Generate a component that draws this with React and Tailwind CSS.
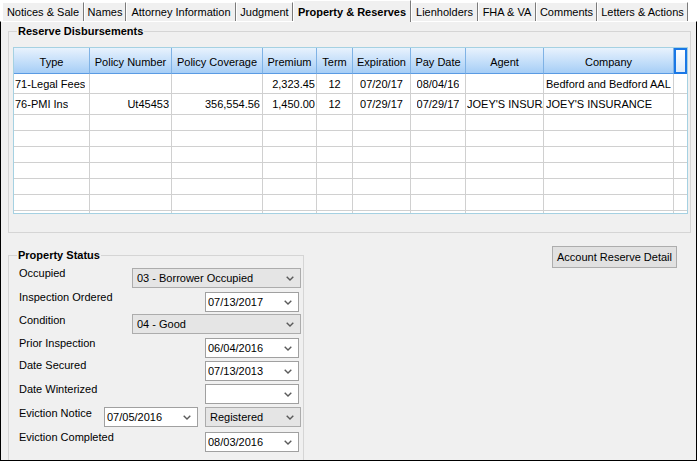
import React from "react";

const tabs = [
  { label: "Notices & Sale", w: "w-[82px]" },
  { label: "Names", w: "w-[42px]" },
  { label: "Attorney Information", w: "w-[110px]" },
  { label: "Judgment", w: "w-[57px]" },
  { label: "Property & Reserves", w: "w-[118px]", active: true },
  { label: "Lienholders", w: "w-[67px]" },
  { label: "FHA & VA", w: "w-[58px]" },
  { label: "Comments", w: "w-[61px]" },
  { label: "Letters & Actions", w: "w-[91px]" },
];

const cols = [
  { label: "Type", w: "w-[76px]", align: "justify-start pl-[1px]" },
  { label: "Policy Number", w: "w-[82px]", align: "justify-end pr-[2px]" },
  { label: "Policy Coverage", w: "w-[91px]", align: "justify-end pr-[2px]" },
  { label: "Premium", w: "w-[54px]", align: "justify-end pr-[1px]" },
  { label: "Term", w: "w-[36px]", align: "justify-center" },
  { label: "Expiration", w: "w-[58px]", align: "justify-center" },
  { label: "Pay Date", w: "w-[55px]", align: "justify-center" },
  { label: "Agent", w: "w-[78px]", align: "justify-start pl-[1px]" },
  { label: "Company", w: "w-[130px]", align: "justify-start pl-[2px]" },
];

const rows = [
  {
    h: "h-[20px]",
    pt: "pt-[1px]",
    cells: ["71-Legal Fees", "", "", "2,323.45", "12", "07/20/17", "08/04/16", "", "Bedford and Bedford AAL"],
  },
  {
    h: "h-[21px]",
    pt: "pt-[1px]",
    cells: ["76-PMI Ins", "Ut45453", "356,554.56", "1,450.00", "12", "07/29/17", "07/29/17", "JOEY'S INSURANCE", "JOEY'S INSURANCE"],
  },
  ...Array.from({ length: 7 }, () => ({ h: "h-[16px]", pt: "", cells: Array(9).fill("") })),
];

function Chevron() {
  return (
    <svg width="8" height="5" viewBox="0 0 8 5" className="shrink-0">
      <path d="M0.7 0.7 L4 4 L7.3 0.7" fill="none" stroke="#5a5a5a" strokeWidth="1.4" />
    </svg>
  );
}

function Combo({ text, w }) {
  return (
    <div className={`${w} h-[20px] shrink-0 bg-[#e5e5e5] border border-[#acacac] flex items-center pl-[4px] pr-[6px]`}>
      <span className="flex-1 whitespace-nowrap overflow-hidden">{text}</span>
      <Chevron />
    </div>
  );
}

function DateBox({ text }) {
  return (
    <div className="w-[94px] h-[20px] shrink-0 bg-white border border-[#a0a0a0] flex items-center pl-[2px] pr-[6px]">
      <span className="flex-1 whitespace-nowrap overflow-hidden">{text}</span>
      <Chevron />
    </div>
  );
}

function Label({ children, adj = "-mt-[1px]" }) {
  return <div className={`pl-[10px] leading-[13px] whitespace-nowrap ${adj}`}>{children}</div>;
}

export default function App() {
  return (
    <div className="w-[697px] h-[461px] bg-white flex flex-col overflow-hidden font-['Liberation_Sans',Arial,sans-serif] text-[11px] leading-[13px] text-black">
      {/* Tab strip */}
      <div className="h-[21px] shrink-0 flex items-end pl-[2px] relative z-10">
        {tabs.map((t) =>
          t.active ? (
            <div
              key={t.label}
              className={`${t.w} h-[22px] -mb-[1px] bg-[#f0f0f0] border-t border-l border-r border-t-white border-l-white border-r-[#7a7a7a] flex items-center justify-center pt-[2px] font-bold whitespace-nowrap`}
            >
              {t.label}
            </div>
          ) : (
            <div
              key={t.label}
              className={`${t.w} h-[19px] bg-[#f0f0f0] border-t border-l border-r border-t-white border-l-white border-r-[#7a7a7a] flex items-center justify-center whitespace-nowrap`}
            >
              {t.label}
            </div>
          )
        )}
      </div>

      {/* Tab page */}
      <div className="flex-1 min-h-0 bg-[#f0f0f0] border border-black border-t-white overflow-hidden flex flex-col">
        <fieldset className="ml-[7px] mt-[3px] w-[683px] border border-[#d5d5d5] pl-[4px] pr-[2px] pb-[18px] shrink-0">
          <legend className="ml-[4px] px-[1px] font-bold leading-[13px]">Reserve Disbursements</legend>
          <div className="mt-[9px] w-[675px] h-[167px] border border-[#a5d1e2] bg-white overflow-hidden">
            {/* header */}
            <div className="flex h-[26px]">
              {cols.map((c) => (
                <div
                  key={c.label}
                  className={`${c.w} h-full shrink-0 flex items-center justify-center pt-[3px] whitespace-nowrap overflow-hidden border-r border-b border-r-[#7fb2e5] border-b-[#5a9be3] bg-linear-to-b from-[#e8f2fd] to-[#a6cef6]`}
                >
                  {c.label}
                </div>
              ))}
              <div className="w-[13px] h-full shrink-0 border-2 border-[#1a78e6] bg-linear-to-b from-white to-[#dcebfb]" />
            </div>
            {/* rows */}
            {rows.map((r, ri) => (
              <div key={ri} className={`flex ${r.h}`}>
                {cols.map((c, ci) => (
                  <div
                    key={ci}
                    className={`${c.w} h-full shrink-0 flex items-center ${c.align} ${r.pt} whitespace-nowrap overflow-hidden border-r border-b border-[#d0d0d0]`}
                  >
                    <span className="min-w-0 overflow-hidden whitespace-nowrap">{r.cells[ci]}</span>
                  </div>
                ))}
                <div className="w-[13px] h-full shrink-0 border-b border-[#d0d0d0]" />
              </div>
            ))}
          </div>
        </fieldset>

        <div className="flex items-start shrink-0">
          <fieldset className="ml-[7px] mt-[16px] w-[296px] h-[240px] border border-[#d5d5d5] shrink-0 pt-[6px]">
            <legend className="ml-[8px] px-[1px] font-bold leading-[13px]">Property Status</legend>
            <div className="flex flex-col">
              <div className="flex items-start h-[24px]">
                <Label>Occupied</Label>
                <div className="ml-auto mr-[2px]">
                  <Combo text="03 - Borrower Occupied" w="w-[169px]" />
                </div>
              </div>
              <div className="flex items-start h-[22px]">
                <Label>Inspection Ordered</Label>
                <div className="ml-auto mr-[4px]">
                  <DateBox text="07/13/2017" />
                </div>
              </div>
              <div className="flex items-start h-[24px]">
                <Label adj="mt-0">Condition</Label>
                <div className="ml-auto mr-[2px]">
                  <Combo text="04 - Good" w="w-[169px]" />
                </div>
              </div>
              <div className="flex items-start h-[23px]">
                <Label>Prior Inspection</Label>
                <div className="ml-auto mr-[4px]">
                  <DateBox text="06/04/2016" />
                </div>
              </div>
              <div className="flex items-start h-[23px]">
                <Label adj="-mt-[2px]">Date Secured</Label>
                <div className="ml-auto mr-[4px]">
                  <DateBox text="07/13/2013" />
                </div>
              </div>
              <div className="flex items-start h-[23px]">
                <Label>Date Winterized</Label>
                <div className="ml-auto mr-[4px]">
                  <DateBox text="" />
                </div>
              </div>
              <div className="flex items-start h-[25px]">
                <Label adj="mt-0">Eviction Notice</Label>
                <div className="ml-auto mr-[2px] flex gap-[7px]">
                  <DateBox text="07/05/2016" />
                  <Combo text="Registered" w="w-[96px]" />
                </div>
              </div>
              <div className="flex items-start h-[22px]">
                <Label>Eviction Completed</Label>
                <div className="ml-auto mr-[4px]">
                  <DateBox text="08/03/2016" />
                </div>
              </div>
            </div>
          </fieldset>
          <button className="ml-auto mr-[19px] mt-[13px] w-[125px] h-[22px] bg-[#e1e1e1] border border-[#adadad] flex items-center justify-center whitespace-nowrap">
            Account Reserve Detail
          </button>
        </div>
      </div>
    </div>
  );
}
